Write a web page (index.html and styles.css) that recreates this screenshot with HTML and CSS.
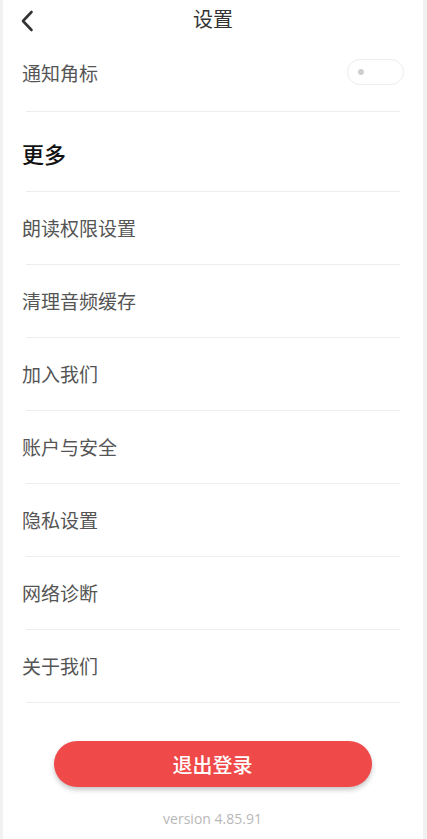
FILE: index.html
```html
<!DOCTYPE html>
<html lang="zh">
<head>
<meta charset="utf-8">
<link rel="stylesheet" href="styles.css">
</head>
<body>
<div class="page">
  <header class="topbar">
    <svg class="back" width="14" height="22" viewBox="0 0 14 22"><path d="M11.5 2 L3 11 L11.5 20" fill="none" stroke="#333" stroke-width="2.6" stroke-linecap="round" stroke-linejoin="round"/></svg>
    <div class="title">设置</div>
  </header>
  <div class="row notify">
    <span class="label">通知角标</span>
    <span class="toggle"><span class="dot"></span></span>
  </div>
  <div class="section">更多</div>
  <div class="row item"><span class="label">朗读权限设置</span></div>
  <div class="row item"><span class="label">清理音频缓存</span></div>
  <div class="row item"><span class="label">加入我们</span></div>
  <div class="row item"><span class="label">账户与安全</span></div>
  <div class="row item"><span class="label">隐私设置</span></div>
  <div class="row item"><span class="label">网络诊断</span></div>
  <div class="row item"><span class="label">关于我们</span></div>
  <div class="footer">
    <button class="logout">退出登录</button>
    <div class="version">version 4.85.91</div>
  </div>
</div>
</body>
</html>
```
FILE: styles.css
```css
* { box-sizing: border-box; }
html, body { margin: 0; padding: 0; background: #f2f2f2; }
body { font-family: "Noto Sans CJK SC", "Noto Sans", sans-serif; }
.page {
  width: 427px;
  height: 839px;
  background: #fff;
  border-left: 3px solid #f1f1f1;
  border-right: 4px solid #f1f1f1;
  overflow: hidden;
}
.topbar {
  height: 40px;
  position: relative;
  display: flex;
  align-items: center;
  justify-content: center;
}
.back { position: absolute; left: 17px; top: 10px; }
.title { font-size: 20px; color: #333; line-height: 1; margin-top: -2px; }
.row {
  display: flex;
  align-items: center;
  justify-content: space-between;
  margin-left: 19px;
  padding-right: 19px;
}
.label { font-size: 19px; color: #555; line-height: 1; }
.notify {
  height: 72px;
  padding-bottom: 8px;
  position: relative;
}
.notify::after, .section::after, .item::after {
  content: "";
  position: absolute;
  left: 4px;
  right: 23px;
  bottom: 0;
  height: 1px;
  background: #eeeeee;
}
.toggle {
  width: 57px;
  height: 26px;
  border: 1.5px solid #ececec;
  border-radius: 13px;
  position: relative;
  display: block;
}
.dot {
  position: absolute;
  left: 10px;
  top: 9px;
  width: 6px;
  height: 6px;
  border-radius: 50%;
  background: #cfcfcf;
}
.section {
  height: 80px;
  margin-left: 19px;
  position: relative;
  display: flex;
  align-items: center;
  padding-top: 2px;
  font-size: 22px;
  color: #111;
  font-weight: 500;
}
.item {
  height: 73px;
  position: relative;
  padding-bottom: 2px;
}
.footer {
  display: flex;
  flex-direction: column;
  align-items: center;
  padding-top: 38px;
  padding-right: 1px;
}
.logout {
  width: 318px;
  height: 46px;
  border: none;
  border-radius: 23px;
  background: #ef4949;
  color: #fff;
  font-family: "Noto Sans CJK SC", "Noto Sans", sans-serif;
  font-size: 20px;
  font-weight: 500;
  box-shadow: 0 3px 5px rgba(0,0,0,0.22);
  padding: 0;
}
.version {
  margin-top: 22px;
  font-size: 14px;
  color: #b8b8b8;
  font-family: "Open Sans", "Noto Sans", sans-serif;
}
```
